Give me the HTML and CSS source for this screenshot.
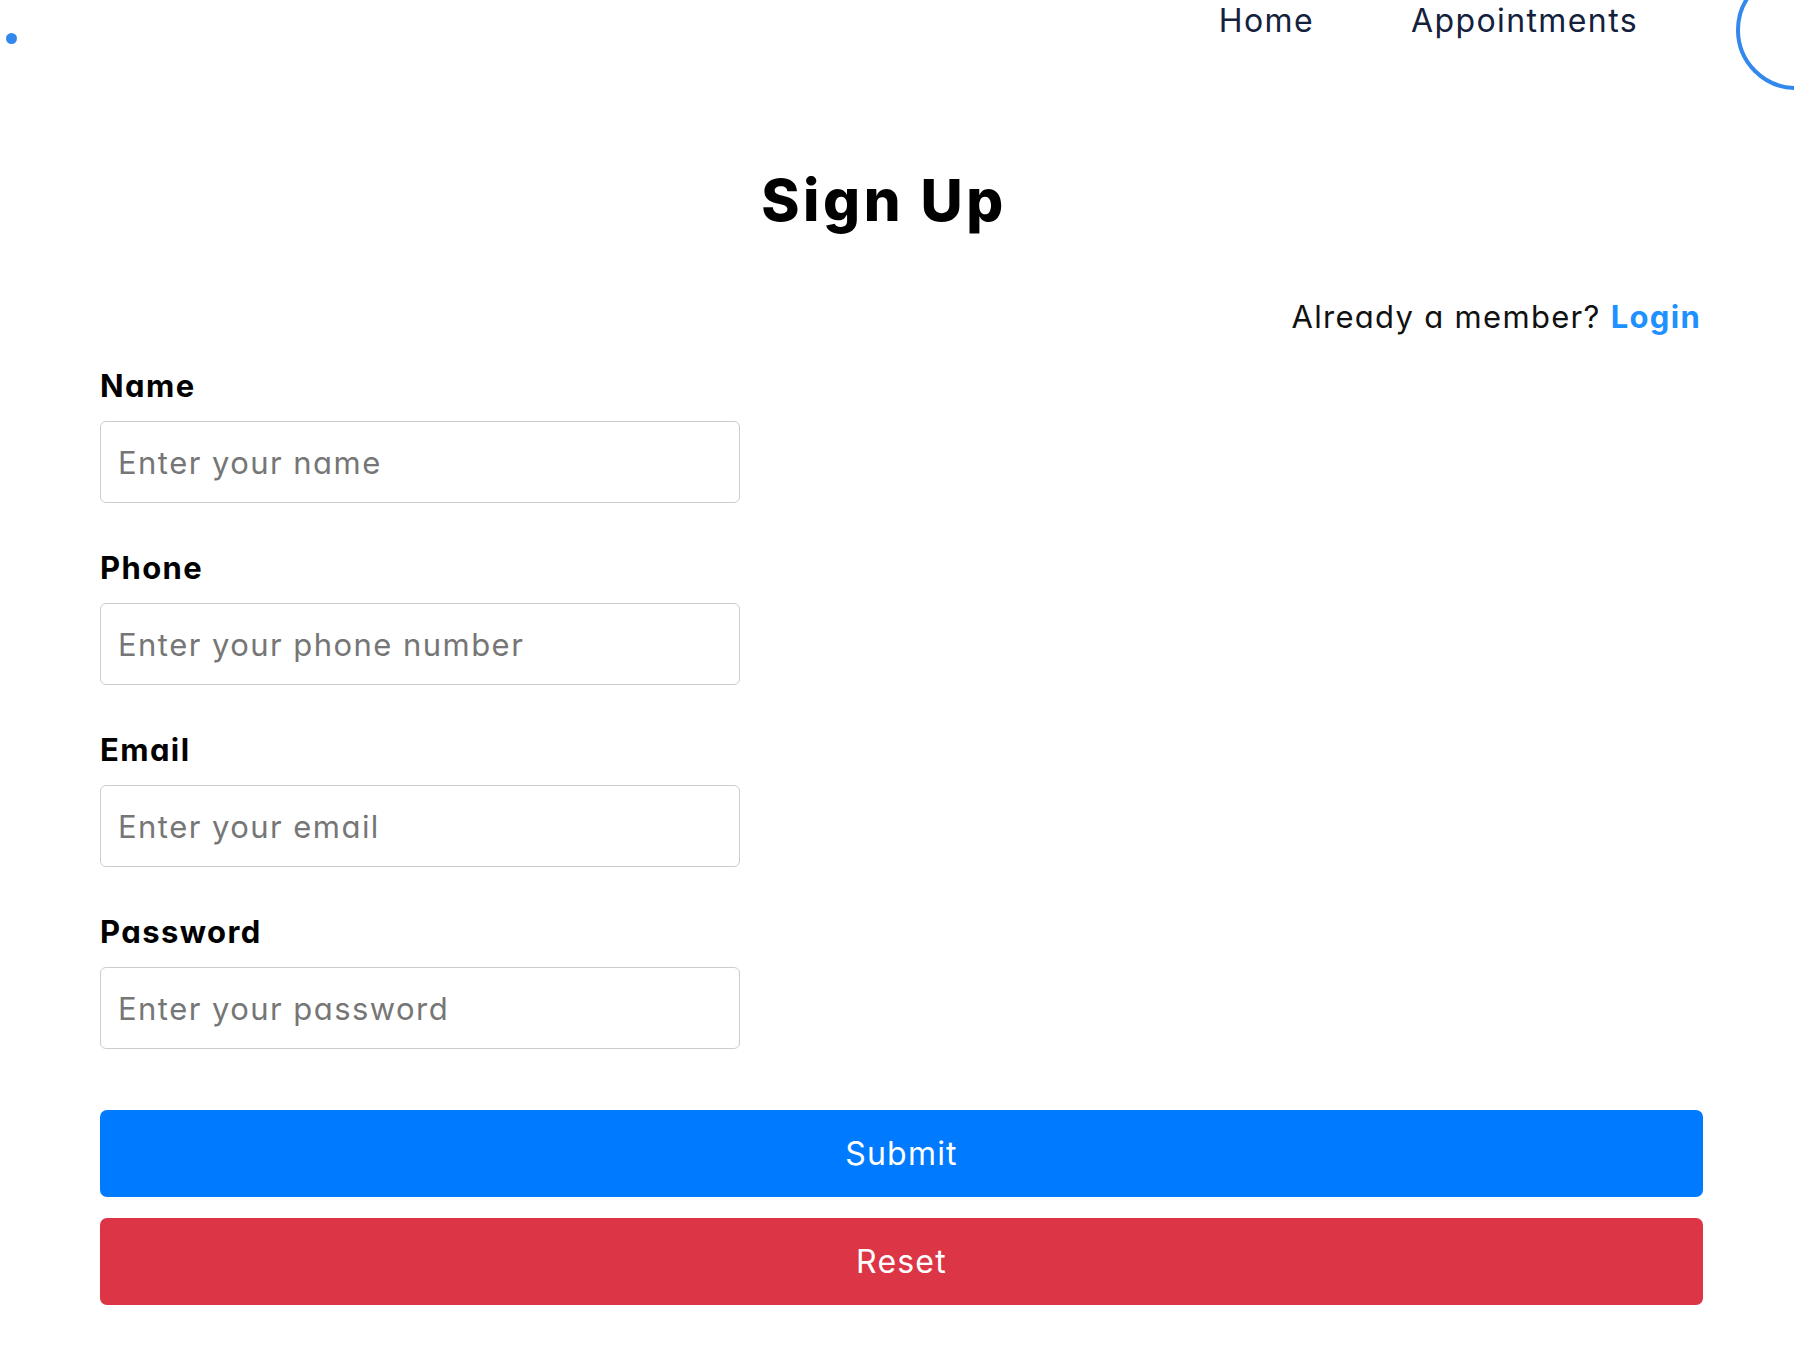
FILE: index.html
```html
<!DOCTYPE html>
<html lang="en">
<head>
<meta charset="utf-8">
<title>Sign Up</title>
<link rel="stylesheet" href="styles.css">
</head>
<body>
<header class="topbar">
  <span class="dot"></span>
  <nav class="nav">
    <a class="nav-link" href="#">Home</a>
    <a class="nav-link" href="#">Appointments</a>
  </nav>
  <span class="ring"></span>
</header>
<main class="container">
  <h1 class="title">Sign Up</h1>
  <p class="member">Already a member? <a class="login" href="#">Login</a></p>
  <form class="form">
    <div class="group">
      <label class="label" for="name">Name</label>
      <input class="input" id="name" type="text" placeholder="Enter your name">
    </div>
    <div class="group">
      <label class="label" for="phone">Phone</label>
      <input class="input" id="phone" type="text" placeholder="Enter your phone number">
    </div>
    <div class="group">
      <label class="label" for="email">Email</label>
      <input class="input" id="email" type="email" placeholder="Enter your email">
    </div>
    <div class="group">
      <label class="label" for="password">Password</label>
      <input class="input" id="password" type="password" placeholder="Enter your password">
    </div>
    <div class="actions">
      <button class="btn btn-primary" type="button">Submit</button>
      <button class="btn btn-danger" type="reset">Reset</button>
    </div>
  </form>
</main>
</body>
</html>
```
FILE: styles.css
```css
* { box-sizing: border-box; }
html, body { margin: 0; padding: 0; }
body {
  font-family: Inter, "Liberation Sans", sans-serif;
  font-feature-settings: "cv11";
  background: #fff;
  color: #000;
  overflow: hidden;
  width: 1794px;
  height: 1367px;
}
.topbar {
  position: relative;
  height: 60px;
  display: flex;
  justify-content: space-between;
  align-items: flex-start;
}
.dot {
  width: 11px;
  height: 11px;
  border-radius: 50%;
  background: #3388ee;
  margin: 33px 0 0 6px;
}
.nav {
  display: flex;
  gap: 97px;
  margin-right: 156px;
  padding-top: 2px;
}
.nav-link {
  font-size: 32px;
  line-height: 38px;
  color: #14213d;
  text-decoration: none;
  letter-spacing: 1.4px;
}
.ring {
  position: absolute;
  top: -30px;
  right: -62px;
  width: 120px;
  height: 120px;
  border: 4px solid #3388ee;
  border-radius: 50%;
}
.container {
  padding: 0 91px 0 100px;
}
.title {
  margin: 109px 0 0;
  padding-right: 35px;
  text-align: center;
  font-size: 58px;
  line-height: 62px;
  font-weight: 800;
  letter-spacing: 3.6px;
}
.member {
  margin: 68px 0 0;
  text-align: right;
  padding-right: 2px;
  font-size: 31px;
  line-height: 36px;
  color: #111;
  letter-spacing: 1.3px;
}
.login {
  color: #1e90ff;
  font-weight: 700;
  text-decoration: none;
}
.form {
  margin-top: 33px;
}
.group {
  display: flex;
  flex-direction: column;
  align-items: flex-start;
  gap: 17px;
  margin-bottom: 47px;
}
.label {
  font-size: 31px;
  line-height: 36px;
  font-weight: 700;
  letter-spacing: 1.4px;
}
.input {
  width: 640px;
  height: 82px;
  border: 1.5px solid #cccccc;
  border-radius: 6px;
  padding: 0 17px;
  font-family: inherit;
  font-feature-settings: "cv11";
  font-size: 31px;
  letter-spacing: 1.45px;
  color: #222;
  background: #fff;
}
.input::placeholder {
  color: #767676;
}
.actions {
  display: flex;
  flex-direction: column;
  gap: 21px;
  margin-top: 61px;
}
.group:last-of-type { margin-bottom: 0; }
.btn {
  width: 100%;
  height: 87px;
  border: 0;
  border-radius: 7px;
  font-family: inherit;
  font-feature-settings: "cv11";
  font-size: 32px;
  letter-spacing: 1.2px;
  color: #fff;
  cursor: pointer;
}
.btn-primary { background: #007bff; }
.btn-danger { background: #dc3545; }
```
